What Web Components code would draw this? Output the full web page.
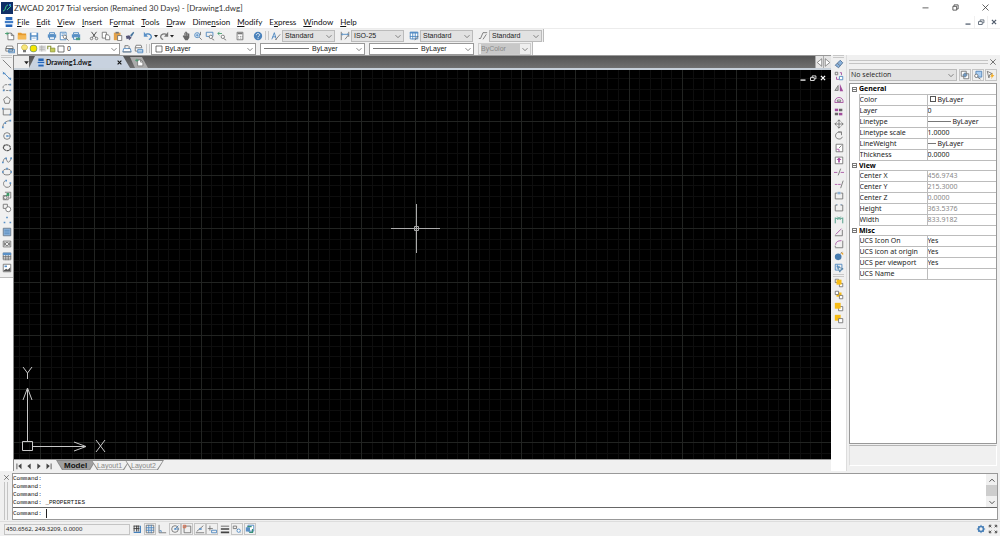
<!DOCTYPE html>
<html lang="en">
<head>
<meta charset="utf-8">
<title>ZWCAD 2017</title>
<style>
html,body{margin:0;height:100%}
body{font:8px/12px "Noto Sans","Open Sans",sans-serif;color:#222;background:#fff;overflow:hidden}
</style>
</head>
<body>
<cad-app></cad-app>
<script>
const define=(name,html,init)=>{
  const t=document.createElement('template');t.innerHTML=html;
  customElements.define(name,class extends HTMLElement{
    constructor(){super();this.attachShadow({mode:'open'})}
    connectedCallback(){
      if(this.shadowRoot.childNodes.length)return;
      this.shadowRoot.append(t.content.cloneNode(true));
      if(init)init(this,this.shadowRoot);
    }
  });
};

/* Icon drawings on a 12 x 12 grid. g grey stroke, b blue stroke, p purple stroke, bf blue fill, w white fill. */
const printer='<path class="bf" d="M1 4h10v4H1z"/><path class="w b" d="M3 2h6v2H3zM3 7h6v3H3z"/>';
const lens='<circle class="w b" cx="5" cy="5" r="3"/><path class="g" d="M7.5 7.5l3 3"/>';
const I={
app:'<path fill="#102f66" d="M0 0h12v12H0z"/><path fill="none" stroke="#3fd08b" d="M2 9c3 0 2-6 5-6M6 8l4-4"/><circle cx="9" cy="3" r="1" fill="#49a8ff"/>',
dwg:'<path fill="#2465b8" d="M2 0h8v4H2zM2 8h8v4H2z"/><path fill="#dcebfb" d="M1 4h10v5H1z"/><path fill="#2465b8" d="M1 5h10v2H1z"/>',
new:'<path class="w g" d="M3.5 2.5h4l3 3v5h-7z"/><path class="g" d="M7.5 2.5v3h3"/><path stroke="#3c9a68" d="M0 3h5M2.500 1v4"/>',
open:'<path fill="#e59a2f" d="M1 2h4l1 1h5v7H1z"/><path fill="#f5b955" d="M1 5h10v5H1z"/>',
save:'<path class="bf" d="M1 2h10v9H1z"/><path fill="#fff" d="M3 2h6v3H3zM3 7h6v4H3z"/><path fill="#76a5d3" d="M4 8h4v1H4z"/>',
print:printer,
preview:'<path class="w b" d="M1.500 1.500h7v9h-7z"/><path class="b" d="M3 3.500h4M3 5.500h2"/><circle class="w g" cx="7" cy="7" r="2"/><path class="g" d="M8.500 8.500l3 3"/>',
plot:printer+'<path fill="#4b9b84" d="M6 8h5v3H6z"/>',
cut:'<path class="d" d="M3 1l5 7M9 1L4 8"/><circle class="g" cx="3" cy="9" r="1.500"/><circle class="g" cx="9" cy="9" r="1.500"/>',
copy:'<path class="w g" d="M1.500 1.500h5v7h-5z"/><path class="w g" d="M5.500 4.500h3l2 2v4h-5z"/>',
paste:'<path fill="#e3a24a" d="M1 2h8v9H1z"/><path fill="#777" d="M3 1h4v2H3z"/><path class="w g" d="M5.500 5.500h5v6h-5z"/>',
match:'<path fill="#48769f" d="M6 5l4-4 1 1-3 5z"/><path fill="#557" d="M1 6l4-1 3 3-3 3-1-2-2 1z"/>',
undo:'<path class="b2" d="M2 5c4-3 8-1 8 2 0 2-2 3-3 3"/><path class="bf" d="M1 1v6h5z"/>',
redo:'<path fill="none" stroke="#777" stroke-width="1.500" d="M10 5C6 2 2 4 2 7c0 2 2 3 3 3"/><path fill="#777" d="M11 1v6H6z"/>',
drop:'<path fill="#222" d="M2 4h8l-4 5z"/>',
hand:'<path fill="#666" d="M2 6l1-1 1 1V2h1V1h2v1h1v1h2v5l-2 3H5z"/><path stroke="#ddd" stroke-width=".5" d="M5.500 2v4M7.500 3v3"/>',
zoomrt:lens+'<path class="b" d="M3 5h4M5 3v4"/><path class="g" d="M9 1v4"/>',
zoomwin:'<path class="b" d="M1.500 1.500h8v5h-8z"/><circle class="w g" cx="7" cy="7" r="2"/><path class="g" d="M8 9l3 2"/>',
zoomprev:'<path stroke="#3c9a68" fill="none" d="M1 3h5M3 1L1 3l2 2"/><circle class="w g" cx="7" cy="7" r="2"/><path class="g" d="M8 9l3 2"/>',
calc:'<path class="w g" d="M2.500 1.500h7v9h-7z"/><path fill="#777" d="M3 2h6v2H3z"/><path class="g" stroke-dasharray="1 1" d="M4 6.500h5M4 8.500h5"/>',
help:'<circle cx="6" cy="6" r="5" fill="#4a82bb"/><path fill="none" stroke="#fff" d="M4 5c0-3 4-2 4-.5S6 6 6 7.500M6 8.500v1"/>',
tstyle:'<path class="b" d="M1 10l3-8 2 7M2 7h4"/><path class="g" d="M6 10l5-6M5 10h2"/>',
dstyle:'<path class="g" d="M1.500 1v10M10.500 1v6"/><path class="b" d="M2 4h8M3 3L2 4l1 1M9 3l1 1-1 1"/><path class="g" d="M6 10l4-5"/>',
tbstyle:'<path class="w b" d="M1.500 1.500h9v8h-9z"/><path class="bf" d="M1 1h10v2H1z"/><path class="b" d="M4.500 2v8M7.500 2v8M1 6.500h10"/><path class="g" d="M7 11l4-5"/>',
mstyle:'<path class="g" d="M1 9h2l3-7h5M6 10l4-6"/>',
layers:'<path class="w g" d="M2 2.500h7l1 3H1zM1 5.500h8v3H1z"/><path class="b" d="M4.500 6.500h7v4h-7zM4 8.500h7"/>',
bulb:'<path fill="#f8e77b" stroke="#b39b25" stroke-width=".7" d="M4 8C0 4 3 1 6 1s6 3 2 7z"/><path fill="#777" d="M4 8h4v3H4z"/>',
sun:'<circle cx="6" cy="6" r="5" fill="#76996e"/><circle cx="6" cy="6" r="4" fill="#f5e600"/>',
vp:'<path fill="#ddd" d="M1 2h10v8H1z"/><path stroke="#aaa" d="M2 4h7M2 7h7M5 2v8"/>',
lock:'<path fill="none" stroke="#8b963c" stroke-width="1.500" d="M1 7V3h4v4"/><path fill="#c4cc56" stroke="#89913b" d="M4.500 5.500h6v5h-6z"/>',
square:'<path class="w d" d="M1.500 1.500h9v9h-9z"/>',
lprev:'<path class="w b" d="M2 5.500h8l1 4H1z"/><path class="g" d="M3.500 5V2h4l1 1v3M1 9.500h10"/>',
lstate:'<path class="w g" d="M2.500 1.500h6l1 3h-8zM1.500 4.500v4h3"/><path class="w b" d="M4.500 6.500h6v4h-6z"/><path class="b" d="M5 8.500h6"/>',
line:'<path class="g" d="M1 1l10 10"/>',
xline:'<path class="b" d="M1 1l10 10"/><path class="bf" d="M1 2h3v2H1zM8 8h3v2H8z"/>',
pline:'<path class="g" d="M10 2H5C0 2 0 9 5 9h5" stroke-dasharray="3 1"/><path class="bf" d="M1 8h2v2H1zM9 8h2v2H9zM9 1h2v2H9z"/>',
polygon:'<path class="g" d="M6 2l4 3-1.500 5h-5L2 5z"/>',
rect:'<path class="g" d="M1.500 2.500h9v7h-9z"/><path class="bf" d="M0 1h2v2H0zM9 8h2v2H9z"/>',
arc:'<path class="g" d="M1 10C1 5 5 2 10 2"/><path class="bf" d="M0 9h2v2H0zM9 1h2v2H9zM3 4h2v2H3z"/>',
circle:'<circle class="g" cx="6" cy="6" r="4"/><path class="b" d="M6 6h4"/><path class="bf" d="M5 5h2v2H5z"/>',
cloud:'<path fill="none" stroke="#555" stroke-width="1.500" stroke-dasharray="3 .5" d="M2 4c2-3 7-2 8 1s-2 5-5 4-4-3-3-5z"/>',
spline:'<path class="g" d="M1 9c2-8 4-5 5-2s4 2 5-4"/><path class="bf" d="M0 8h2v2H0zM4 3h2v2H4zM10 3h2v2h-2z"/>',
ellipse:'<ellipse class="g" cx="6" cy="6" rx="5" ry="3.500"/><path class="bf" d="M0 5h2v2H0zM10 5h2v2h-2zM5 1h2v2H5z"/>',
earc:'<path class="g" d="M4 2C0 4 2 10 6 10c3 0 5-2 4-4"/><path class="bf" d="M4 1h2v2H4zM9 4h2v2H9z"/>',
insert:'<path class="g" d="M3.500 1.500h7v7h-2M1.500 5.500h6v5h-6z"/><circle cx="4" cy="8" r="2" class="g"/><path fill="none" stroke="#3c9a68" stroke-width="1.500" d="M5 6l3-3M5.500 3H8v3"/>',
block:'<path class="g" d="M1.500 1.500h5v5h-5z"/><circle class="w g" cx="7.500" cy="7.500" r="3"/>',
point:'<path class="bf" d="M5 2h2v2H5zM2 8h2v2H2zM9 8h2v2H9z"/>',
hatch:'<path fill="#8ab2dc" stroke="#687685" d="M1.500 1.500h9v9h-9z"/><path stroke="#5c8dbc" d="M3 4h6M3 6h6M3 8h6"/>',
region:'<path class="g" d="M1.500 2.500h9v7h-9z"/><circle class="g" cx="6" cy="6" r="2"/><path class="g" d="M3 4v4M9 4v4"/>',
table:'<path class="w g" d="M1.500 2.500h9v8h-9zM1 6.500h10M1 8.500h10M4.500 3v8M7.500 3v8"/><path class="bf" d="M1 2h10v3H1z"/>',
image:'<path class="w g" d="M1.500 1.500h9v9h-9z"/><path class="bf" d="M3 3h3v2H3z"/><path fill="#555" d="M2 9l3-2 2 1 3-3v5H2z"/>',
erase:'<path fill="#8ab2dc" stroke="#4a6b90" d="M1.500 7.500l6-6 3 3-5 6z"/><path class="g" d="M4 5l3 3"/>',
copyobj:'<path class="g" d="M1.500 1.500h3v3h-3z"/><path class="w b" d="M6.500 6.500h4v4h-4z"/><path class="p" d="M7 2h2v3M3 7v3h3"/>',
mirror:'<path fill="#bbb" stroke="#777" d="M1 9l4-6v6z"/><path fill="#a14b9c" d="M7 1l4 9H7z"/>',
offset:'<path class="p" d="M1 9c0-4 2-6 5-6s5 2 5 6z"/><path class="g" d="M4 8V6h4v2z"/>',
array:'<path fill="#a14b9c" d="M1 2h4v3H1z"/><path fill="#666" d="M6 2h4v3H6zM1 7h4v3H1z"/><path fill="#a14b9c" d="M6 7h4v3H6z"/>',
move:'<path class="g" d="M6 1v10M1 6h10M4 3l2-2 2 2M4 9l2 2 2-2M3 4L1 6l2 2M9 4l2 2-2 2"/>',
rotate:'<path class="g" d="M8 2C4 0 1 4 2 7s7 4 8 0M5 1h4v4"/>',
scale:'<path class="w g" d="M2.500 1.500h8v9h-8z"/><path class="p" d="M3 7.500h3v3"/><path class="g" d="M6 6l3-3"/>',
stretch:'<path class="w g" d="M1.500 2.500h9v8h-9z"/><path fill="#a14b9c" d="M6 3l3 3H7v3H5V6H3z"/>',
trim:'<path class="g" d="M5 10l3-8"/><path class="p" d="M0 6.500h4M8 6.500h4"/>',
extend:'<path class="g" d="M8 11l3-9"/><path class="p" d="M1 6.500h3M5 6.500h3"/>',
brk1:'<path class="g" d="M4 2.500H1.500v7h9v-7H8"/><path class="b" d="M5 1v3M7 1v3"/>',
brk2:'<path class="g" d="M4 2.500H1.500v7h9v-7H8"/><path class="b" d="M3 2h1M8 2h1"/>',
join:'<path stroke="#389078" fill="none" d="M1.500 10V3M10.500 10V3M2 4h3M10 4H7M4 2l2 2-2 2M8 2L6 4l2 2"/>',
chamfer:'<path class="g" d="M1 10.500h9v-7"/><path class="p" d="M2 9l7-7"/>',
fillet:'<path class="g" d="M1.500 10.500h9V2M1.500 10V8"/><path class="p" d="M2 7c0-3 2-5 7-5"/>',
explode:'<circle cx="5" cy="7" r="4" fill="#4479ad"/><path class="g" d="M8 3l2-2"/><path fill="#e9a22b" d="M8 2h3v3z"/>',
select:'<path class="b" d="M1.500 1.500h8v7h-8zM3 4h4M4 2v5"/><path fill="#fff" stroke="#42769f" d="M5 5l6 2-3 1-1 3z"/>',
front:'<path class="w g" d="M1.500 1.500h4v4h-4zM6.500 6.500h4v4h-4z"/><path fill="#f7bc17" d="M3 2h6v6H3z"/>',
back:'<path fill="#f7bc17" d="M3 3h6v5H3z"/><path class="w g" d="M1.500 1.500h4v4h-4zM6.500 6.500h4v4h-4z"/>',
above:'<path class="w g" d="M5.500 5.500h5v5h-5z"/><path fill="#f7bc17" d="M1 1h7v7H1z"/>',
under:'<path fill="#f7bc17" d="M1 1h7v7H1z"/><path class="w g" d="M5.500 5.500h5v5h-5z"/>',
pick:'<path class="w g" d="M1.500 1.500h6v6h-6zM4.500 4.500h6v6h-6z"/><path class="b" d="M6 3v6M3 6h6"/>',
qsel:'<path fill="#a9cdf2" stroke="#4d80b3" d="M3.500 1.500h7v7h-7z"/><circle class="w g" cx="4" cy="7" r="2"/><path class="g" d="M6 9l3 2"/>',
filter:'<path class="w g" d="M1.500 1.500l6 3-3 1-1 4z"/><path fill="#f5b02b" d="M8 3L5 8h2l-1 3 4-5H8z"/>',
chev:'<path class="g" d="M3 5l3 3 3-3"/>',
up:'<path class="d" d="M3 8l3-3 3 3"/>',
down:'<path class="d" d="M3 5l3 3 3-3"/>',
min:'<path class="d" d="M2 6.500h8"/>',
restore:'<path class="d" d="M2.500 4.500h5v5h-5zM4 4V2.500h5.500V8H8"/>',
close:'<path class="d" d="M2 2l8 8M10 2l-8 8"/>',
closeb:'<path fill="none" stroke="currentColor" stroke-width="1.500" d="M3.500 3.500l5 5M8.500 3.500l-5 5"/>',
minb:'<path fill="none" stroke="currentColor" stroke-width="1.500" d="M3 8.500h6"/>',
restb:'<path fill="none" stroke="currentColor" d="M3 5.500h4.500v3.500H3zM5 5V3.500h4.500V7H8"/>',
left:'<path class="w g" d="M9 1L3 6l6 5z"/>',
right:'<path class="w g" d="M3 1l6 5-6 5z"/>',
prev:'<path fill="#444" d="M8 3L4 6l4 4z"/>',
next:'<path fill="#444" d="M4 3l4 3-4 4z"/>',
first:'<path fill="#444" d="M9 3L5 6l4 4zM3 3h1v7H3z"/>',
last:'<path fill="#444" d="M3 3l4 3-4 4zM8 3h1v7H8z"/>',
snap:'<path class="b2" d="M2 10h8V2"/><path class="d" d="M2.500 2v7M5.500 2v7M7.500 2v7M2 2.500h7M2 5.500h7"/>',
grid:'<path class="g" d="M1.500 1.500h9v9h-9z"/><path class="b" d="M4.500 1v10M7.500 1v10M1 4.500h10M1 7.500h10"/>',
ortho:'<path class="g" d="M2.500 1v9.500H11"/><path class="b" d="M3 8h2v2"/>',
polar:'<circle class="g" cx="6" cy="6" r="4"/><path class="b" d="M10 2L6 6h5"/><path class="bf" d="M5 5h2v2H5z"/>',
osnap:'<path class="g" d="M2.500 2.500h8v8h-8z"/><path fill="none" stroke="#d95f38" d="M1.500 1.500h3v3h-3z"/>',
otrack:'<path class="g" d="M1 10.500h10M2 9l8-7"/><path class="bf" d="M5 5h3v2H5z"/>',
dyn:'<path class="g" d="M3.500 2v6M1 5.500h6"/><path class="b" d="M5.500 7.500h6v3h-6z"/>',
lwt:'<path fill="#444" d="M1 2h10v1H1zM1 5h10v2H1zM1 9h10v2H1z"/>',
cycle:'<path class="g" d="M1.500 2.500h4v3h-4zM6 6l4 4"/><circle class="w b" cx="8" cy="8" r="2"/>',
annot:'<path class="w b" d="M3.500 1.500h7v7h-7z"/><path class="bf" d="M1 4h5v5H1z"/><path stroke="#389078" fill="none" stroke-width="1.500" d="M5 10h4V6M3 3h5"/>',
gear:'<circle cx="6" cy="6" r="3" fill="none" stroke="#477eb5" stroke-width="2"/><path class="b" d="M6 1v2M6 9v2M1 6h2M9 6h2M2.500 2.500L4 4M8 8l1.500 1.500M9.500 2.500L8 4M4 8L2.500 9.500"/>',
full:'<path class="d" d="M1.500 4V1.500H4M8 1.500h2.500V4M10.500 8v2.500H8M4 10.500H1.500V8M2 2l2 2M10 2L8 4M10 10L8 8M2 10l2-2"/>'
};
customElements.define('cad-icon',class extends HTMLElement{
  static observedAttributes=['name'];
  constructor(){
    super();
    this.attachShadow({mode:'open'}).innerHTML=`<style>
    :host{display:block;width:12px;height:12px;flex:none}
    svg{display:block;width:100%;height:100%}
    .g,.b,.p,.d,.b2{fill:none;stroke:#6d6d6d}.b{stroke:#4381bd}.p{stroke:#a14b9c}.d{stroke:#333}
    .b2{stroke:#4381bd;stroke-width:1.5}.bf{fill:#5990c7}.w{fill:#fff}
    </style><svg viewBox="0 0 12 12" aria-hidden="true"></svg>`;
  }
  attributeChangedCallback(n,o,v){this.shadowRoot.querySelector('svg').innerHTML=I[v]||''}
});

define('cad-tool',`<style>
:host{display:block;flex:none}
button{display:flex;align-items:center;justify-content:center;box-sizing:border-box;width:100%;height:100%;padding:0;border:0;background:none;color:inherit}
cad-icon{width:var(--icon,10px);height:var(--icon,10px)}
:host([boxed]) button{border:1px solid #c4c4c4}
</style><button type="button"><cad-icon></cad-icon></button>`,(h,r)=>{
  r.querySelector('cad-icon').setAttribute('name',h.getAttribute('icon'));
  const b=r.querySelector('button');b.title=h.title||h.getAttribute('icon');b.setAttribute('aria-label',b.title);h.removeAttribute('title');
});

define('cad-combo',`<style>
:host{display:flex;align-items:center;box-sizing:border-box;height:12px;border:1px solid #999;background:#fff;padding-left:2px;color:#222;min-width:0}
:host([flat]){background:#e2e2e2;border-color:#bbb}
:host([disabled]){background:#eee;border-color:#ccc;color:#888}
select{appearance:none;flex:1;min-width:0;height:10px;border:0;padding:0;margin:0;background:none;color:inherit;opacity:1;font:inherit;line-height:10px;outline:0}
:host([disabled]) select{background:#c8c8c8}
cad-icon{width:10px;height:10px}
</style><slot></slot><select></select><cad-icon name="chev"></cad-icon>`,(h,r)=>{
  const s=r.querySelector('select');s.setAttribute('aria-label',h.getAttribute('label'));
  s.append(new Option(h.getAttribute('value')));s.disabled=h.hasAttribute('disabled');
});

define('cad-title-bar',`<style>
:host{display:flex;align-items:center;height:15px;padding-left:1px;color:#333;background:#fff}
h1{flex:1;margin:0 0 0 1px;font:8px/12px Lato,"Open Sans",sans-serif;white-space:nowrap}
cad-tool{width:30px;height:15px;--icon:9px}
</style><cad-icon name="app"></cad-icon><h1>ZWCAD 2017 Trial version (Remained 30 Days) - [Drawing1.dwg]</h1>
<cad-tool icon="min" title="Minimize"></cad-tool><cad-tool icon="restore" title="Restore"></cad-tool><cad-tool icon="close" title="Close"></cad-tool>`);

define('cad-menu-bar',`<style>
:host{display:flex;align-items:center;height:13px;padding:0 0 0 4px;background:#fff}
nav{display:flex;flex:1;gap:7px;margin-left:3px}
button{border:0;background:none;padding:0;font:8px/12px Lato,"Open Sans",sans-serif;color:#111}
cad-icon{width:10px;height:10px}
.win{display:flex;gap:1px;background:#f0f0f0}
.win cad-tool{width:12px;height:12px;background:#fff;color:#4f5b6b;--icon:10px}
</style><cad-icon name="dwg"></cad-icon><nav aria-label="Menu"></nav>
<div class="win"><cad-tool icon="minb" title="Minimize drawing"></cad-tool><cad-tool icon="restb" title="Restore drawing"></cad-tool><cad-tool icon="closeb" title="Close drawing"></cad-tool></div>`,(h,r)=>{
  r.querySelector('nav').innerHTML=['_File','_Edit','_View','_Insert','F_ormat','_Tools','_Draw','Dime_nsion','_Modify','E_xpress','_Window','_Help']
   .map(m=>`<button type="button">${m.replace(/_(.)/,'<u>$1</u>')}</button>`).join('');
});

define('cad-toolbars',`<style>
:host{display:block;background:#fff;border-top:1px solid #ececec;font:7px/10px "Liberation Sans",Arial,sans-serif}
.row{display:flex;align-items:center;width:max-content;height:13px;box-sizing:border-box;background:#f0f0f0;border-right:1px solid #bbb;padding:0 1px 0 4px;--icon:10px}
.row cad-tool{width:12px;height:12px}
.row .dd{width:4px;--icon:6px}
.gap{margin-left:6px}
.grip{width:2px;height:9px;border:solid #c8c8c8;border-width:0 1px;margin:0 1px}
.row .std{width:53px;margin-right:4px}
.row .last{margin-right:0}
.layer{width:103px;margin:0 1px}
.wide{width:105px;margin-right:4px}
.line{flex:none;width:45px;height:1px;background:#777;margin:0 3px 0 1px}
.layer cad-icon,.wide cad-icon{width:9px;height:9px}
.layer .sq,.wide .sq{width:8px;height:8px;margin:0 2px 0 1px}
.dis{width:53px}
</style>
<div class="row">
<cad-tool icon="new"></cad-tool><cad-tool icon="open"></cad-tool><cad-tool icon="save"></cad-tool>
<cad-tool class="gap" icon="print"></cad-tool><cad-tool icon="preview"></cad-tool><cad-tool icon="plot"></cad-tool>
<cad-tool class="gap" icon="cut"></cad-tool><cad-tool icon="copy"></cad-tool><cad-tool icon="paste"></cad-tool><cad-tool icon="match"></cad-tool>
<cad-tool class="gap" icon="undo"></cad-tool><cad-tool class="dd" icon="drop" title="Undo list"></cad-tool><cad-tool icon="redo"></cad-tool><cad-tool class="dd" icon="drop" title="Redo list"></cad-tool>
<cad-tool class="gap" icon="hand" title="Pan"></cad-tool><cad-tool icon="zoomrt"></cad-tool><cad-tool icon="zoomwin"></cad-tool><cad-tool icon="zoomprev"></cad-tool>
<cad-tool class="gap" icon="calc"></cad-tool><cad-tool class="gap" icon="help"></cad-tool><span class="grip"></span>
<cad-tool icon="tstyle"></cad-tool><cad-combo flat class="std" label="Text style" value="Standard"></cad-combo>
<cad-tool icon="dstyle"></cad-tool><cad-combo flat class="std" label="Dimension style" value="ISO-25"></cad-combo>
<cad-tool icon="tbstyle"></cad-tool><cad-combo flat class="std" label="Table style" value="Standard"></cad-combo>
<cad-tool icon="mstyle"></cad-tool><cad-combo flat class="std last" label="Multileader style" value="Standard"></cad-combo>
</div>
<div class="row">
<cad-tool icon="layers"></cad-tool>
<cad-combo class="layer" label="Layer" value="0"><cad-icon name="bulb"></cad-icon><cad-icon name="sun"></cad-icon><cad-icon name="vp"></cad-icon><cad-icon name="lock"></cad-icon><cad-icon class="sq" name="square"></cad-icon></cad-combo>
<cad-tool icon="lprev"></cad-tool><cad-tool icon="lstate"></cad-tool><span class="grip"></span>
<cad-combo class="wide" label="Color" value="ByLayer"><cad-icon class="sq" name="square"></cad-icon></cad-combo>
<cad-combo class="wide" label="Linetype" value="ByLayer"><span class="line"></span></cad-combo>
<cad-combo class="wide" label="Lineweight" value="ByLayer"><span class="line"></span></cad-combo>
<cad-combo class="dis" disabled label="Plot style" value="ByColor"></cad-combo>
</div>`);

define('cad-palette',`<style>
:host{display:block;background:#fff}
.set{display:flex;flex-direction:column;align-items:center;background:#f0f0f0;border-bottom:1px solid #bbb;padding-bottom:3px}
.set:not(:last-child){border-bottom:0;padding-bottom:0}
.set::before{content:"";width:11px;height:1px;border:solid #c8c8c8;border-width:1px 0}
cad-tool{width:14px;height:12px;--icon:10px}
</style><div id="root"></div>`,(h,r)=>{
  r.getElementById('root').innerHTML=h.getAttribute('icons').split('|').map(s=>`<div class="set" role="toolbar">${s.trim().split(/\s+/).map(n=>`<cad-tool icon="${n}"></cad-tool>`).join('')}</div>`).join('');
});

define('cad-canvas',`<style>
:host{display:block;position:relative;flex:1;min-height:0;background:#000;overflow:hidden}
.grid{position:absolute;inset:0;width:100%;height:100%}
.cross{position:absolute;left:377px;top:133px;width:50px;height:50px}
.ucs{position:absolute;left:6px;bottom:7px;width:90px;height:86px}
.win{position:absolute;right:3px;top:3px;display:flex;color:#fff}
.win cad-tool{width:10px;height:10px;--icon:10px}
</style><svg class="grid" aria-hidden="true"></svg>
<svg class="cross" viewBox="0 0 50 50"><path fill="none" stroke="#aaa" d="M0 25.500h49M25.500 1v49M23.500 23.500h4v4h-4z"/></svg>
<svg class="ucs" viewBox="0 0 90 86"><g fill="none" stroke="#c8c8c8"><path d="M2.500 75.500h10v9h-10zM7.500 75V23M3 34l4.500-12 4.500 12M13 80.500h52M54 76l12 4.500L54 85"/><path d="M3 1l4.500 6L12 1M7.500 7v6M76 74l9 12M85 74l-9 12"/></g></svg>
<div class="win"><cad-tool icon="minb" title="Minimize view"></cad-tool><cad-tool icon="restb" title="Restore view"></cad-tool><cad-tool icon="closeb" title="Close view"></cad-tool></div>`,(h,r)=>{
  /* Every fifth grid line is a major one. */
  const step=10.7;let minor='',major='';
  for(let i=-2;i<300;i++){
    const p=Math.round(26+i*step)+.5,q=Math.round(51+(i-2)*step)+.5,v=`M${p} 0V2000`,w=`M0 ${q}H4000`;
    if(i%5===0)major+=v;else minor+=v;
    if((i-2)%5===0)major+=w;else minor+=w;
  }
  r.querySelector('.grid').innerHTML=`<path stroke="#0e0e0e" d="${minor}"/><path stroke="#222422" d="${major}"/>`;
});

define('cad-document',`<style>
:host{display:flex;flex-direction:column;min-width:0;min-height:0;background:#f0f0f0;border-left:1px solid #8a8a8a}
.tabs{display:flex;align-items:flex-end;height:15px;box-sizing:border-box;background:linear-gradient(#555,#707070);border-top:1px solid #999;border-bottom:2px solid #c6d0da;--icon:9px}
.tabs .lead{width:10px;height:12px;background:#ececec}
.tabs .list{width:5px;height:12px;background:#ececec;--icon:7px}
.tab{display:flex;align-items:center;width:101px;height:12px;background:#c8d2df;clip-path:polygon(6px 0,94px 0,100% 100%,0 100%);box-sizing:border-box;padding:0 6px 0 8px}
.tab cad-icon{width:8px;height:9px;margin-right:1px}
.tab button{flex:1;border:0;background:none;padding:0;text-align:left;white-space:nowrap;font:bold 7px/12px Lato,"Open Sans",sans-serif;color:#111}
.tab cad-tool{width:10px;height:10px;color:#111}
.plus{width:18px;height:11px;background:#aaa;clip-path:polygon(0 0,12px 0,100% 100%,5px 100%)}
.space{flex:1}
.arr{width:7px;height:12px;background:#e5e5e5;border-left:1px solid #aaa}
.bottom{display:flex;align-items:stretch;height:11px;background:#f0f0f0;border-top:1px solid #999;--icon:10px}
.bottom cad-tool{width:10px;height:11px}
.bottom cad-tool:nth-of-type(4){margin-right:2px}
.lay{border:0;padding:0;margin-right:-5px;background:#888;height:10px;clip-path:polygon(0 0,100% 0,calc(100% - 6px) 100%,6px 100%);font:7px/10px "Liberation Sans",sans-serif;color:#888}
.lay span{display:block;height:9px;line-height:10px;padding:0 7px 0 5px;background:#f0f0f0;margin:0 1px;clip-path:polygon(0 0,100% 0,calc(100% - 6px) 100%,6px 100%)}
.lay.on{font:bold 8px/10px "Liberation Sans",sans-serif;color:#111}
.lay.on span{background:#a0a0a0;padding:0 8px 0 7px}
</style>
<div class="tabs"><span class="lead"></span><cad-tool class="list" icon="drop" title="Drawing list"></cad-tool>
<div class="tab"><cad-icon name="dwg"></cad-icon><button type="button">Drawing1.dwg</button><cad-tool icon="closeb" title="Close tab"></cad-tool></div>
<cad-tool class="plus" icon="new" title="New drawing"></cad-tool><span class="space"></span>
<cad-tool class="arr" icon="left" title="Scroll left"></cad-tool><cad-tool class="arr" icon="right" title="Scroll right"></cad-tool></div>
<cad-canvas></cad-canvas>
<div class="bottom"><cad-tool icon="first"></cad-tool><cad-tool icon="prev"></cad-tool><cad-tool icon="next"></cad-tool><cad-tool icon="last"></cad-tool>
<button type="button" class="lay on"><span>Model</span></button><button type="button" class="lay"><span>Layout1</span></button><button type="button" class="lay"><span>Layout2</span></button></div>`);

define('cad-properties',`<style>
:host{display:flex;flex-direction:column;min-height:0;box-sizing:border-box;background:#f0f0f0;border-left:1px solid #ddd;padding:1px 3px 5px 2px}
.head{display:flex;align-items:center;height:12px}
.head i{flex:1;height:2px;border:solid #c4c4c4;border-width:1px 0}
.head cad-tool{width:9px;height:12px;--icon:8px}
.pick{display:flex;align-items:center;gap:1px;height:14px;margin-bottom:1px}
.pick cad-combo{flex:1;height:12px;padding-left:1px;margin-right:1px;font-family:"Open Sans","Noto Sans",sans-serif;font-size:7px}
.pick cad-tool{width:12px;height:12px;--icon:10px}
.box{flex:1;background:#fff;border:1px solid #999;min-height:0;overflow:hidden}
table{width:100%;border-collapse:collapse;table-layout:fixed;font:7px/10px "Noto Sans","Open Sans",sans-serif}
col.a{width:9px}col.b{width:68px}
tr{height:11px}
td,th{padding:0;height:10px;line-height:10px;border:solid #bcbcbc;border-width:0 0 1px 1px;text-align:left;font-weight:400;white-space:nowrap;overflow:hidden}
td.x{border-width:0}
tr.head-row{height:10px}
th.h{height:9px;line-height:9px;font-weight:700;color:#000;border-left:0}
tr.head-row td{height:9px;line-height:9px;border:0;text-align:center}
tr.head-row td span{display:block;width:3px;height:3px;border:1px solid #777;margin:0 auto;background:linear-gradient(#777,#777) 0 1px/3px 1px no-repeat}
td.ro{color:#888}
.c{display:inline-block;width:4px;height:4px;border:1px solid #555;margin:0 2px 0 2px}
.l{display:inline-block;width:23px;height:1px;background:#777;margin:0 2px 2px 0}
.s{width:8px}
.foot{height:19px;margin-top:1px;border:1px solid #ccc;border-color:#b5b5b5 #fff #fff #ddd}
</style>
<div class="head"><i></i><cad-tool icon="close" title="Close panel"></cad-tool></div>
<div class="pick"><cad-combo flat label="Selection" value="No selection"></cad-combo><cad-tool boxed icon="pick"></cad-tool><cad-tool boxed icon="qsel"></cad-tool><cad-tool boxed icon="filter"></cad-tool></div>
<div class="box"><table><colgroup><col class="a"><col class="b"><col></colgroup><tbody></tbody></table></div><div class="foot"></div>`,(h,r)=>{
  const data=[['General'],['Color','<span class="c"></span>ByLayer'],['Layer','0'],['Linetype','<span class="l"></span>ByLayer'],['Linetype scale','1.0000'],['LineWeight','<span class="l s"></span>ByLayer'],['Thickness','0.0000'],
  ['View'],['Center X','456.9743',1],['Center Y','215.3000',1],['Center Z','0.0000',1],['Height','363.5376',1],['Width','833.9182',1],
  ['Misc'],['UCS Icon On','Yes'],['UCS icon at origin','Yes'],['UCS per viewport','Yes'],['UCS Name','']];
  r.querySelector('tbody').innerHTML=data.map(([k,v,ro])=>v===undefined?`<tr class="head-row"><td><span></span></td><th class="h" colspan="2">${k}</th></tr>`:`<tr><td class="x"></td><th scope="row">${k}</th><td class="${ro?'ro':''}">${v}</td></tr>`).join('');
});

define('cad-command',`<style>
:host{display:flex;height:50px;box-sizing:border-box;background:#f0f0f0;padding:2px 2px 1px 0;font:6px/8px "Liberation Mono",monospace;color:#111}
.side{display:flex;flex-direction:column;align-items:center;width:12px}
.side cad-tool{width:12px;height:9px;--icon:7px}
.side i{flex:1;width:2px;border:solid #c4c4c4;border-width:0 1px}
.box{flex:1;display:flex;flex-direction:column;border:1px solid #999;background:#fff;min-width:0}
.top{display:flex;height:33px;border-bottom:1px solid #666}
pre{flex:1;margin:0;padding-top:1px;font:inherit}
.bar{display:flex;flex-direction:column;width:11px;background:#f0f0f0}
.bar cad-tool{width:11px;height:11px;--icon:10px}
.bar b{height:11px;background:#cdcdcd}
label{display:flex;flex:1;align-items:center}
input{flex:1;min-width:0;height:9px;border:0;border-left:1px solid #222;padding:0;margin-left:4px;font:inherit;outline:0;background:none}
</style><div class="side"><cad-tool icon="close" title="Close command line"></cad-tool><i></i></div>
<div class="box"><div class="top"><pre>Command:
Command:
Command:
Command: _PROPERTIES</pre><div class="bar"><cad-tool icon="up"></cad-tool><b></b><cad-tool icon="down"></cad-tool></div></div>
<label>Command:<input type="text"></label></div>`);

define('cad-status',`<style>
:host{display:flex;align-items:center;height:15px;box-sizing:border-box;background:#f0f0f0;border-top:1px solid #ddd;padding:0 1px 0 4px}
output{box-sizing:border-box;width:126px;height:11px;border:1px solid #c4c4c4;padding-left:1px;font:6px/9px "Noto Sans","Open Sans",sans-serif}
.set{display:flex;justify-content:space-between;width:125px;margin-left:1px}
cad-tool{width:12px;height:12px;--icon:10px}
.end{margin-left:auto;display:flex}
</style><output>450.6562, 249.3209, 0.0000</output>
<div class="set"><cad-tool icon="snap"></cad-tool><cad-tool boxed icon="grid"></cad-tool><cad-tool icon="ortho"></cad-tool><cad-tool boxed icon="polar"></cad-tool><cad-tool boxed icon="osnap"></cad-tool><cad-tool boxed icon="otrack"></cad-tool><cad-tool boxed icon="dyn"></cad-tool><cad-tool icon="lwt"></cad-tool><cad-tool boxed icon="cycle"></cad-tool><cad-tool boxed icon="annot"></cad-tool></div>
<div class="end"><cad-tool icon="gear" title="Settings"></cad-tool><cad-tool icon="full" title="Full screen"></cad-tool></div>`);

define('cad-app',`<style>
:host{display:flex;flex-direction:column;height:100vh;overflow:hidden}
main{flex:1;display:grid;grid-template-columns:13px minmax(0,1fr) 15px 154px;grid-template-rows:minmax(0,1fr);min-height:0;background:#f0f0f0}
</style>
<cad-title-bar></cad-title-bar><cad-menu-bar></cad-menu-bar><cad-toolbars></cad-toolbars>
<main><cad-palette icons="line xline pline polygon rect arc circle cloud spline ellipse earc insert block point hatch region table image"></cad-palette>
<cad-document></cad-document>
<cad-palette icons="erase copyobj mirror offset array move rotate scale stretch trim extend brk1 brk2 join chamfer fillet explode select | front back above under"></cad-palette>
<cad-properties></cad-properties></main>
<cad-command></cad-command><cad-status></cad-status>`);
</script>
</body>
</html>
